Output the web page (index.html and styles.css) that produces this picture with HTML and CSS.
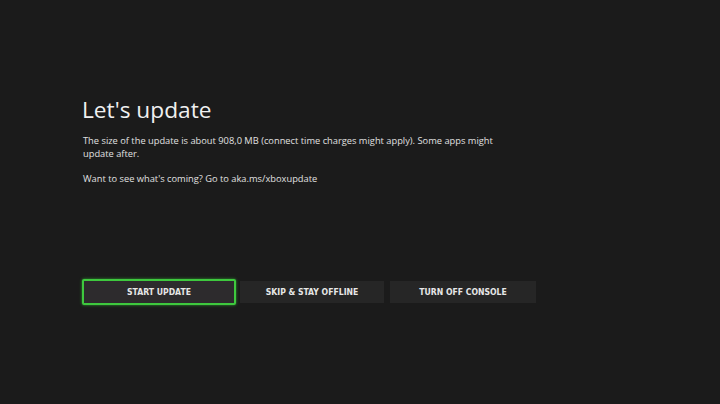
FILE: index.html
```html
<!DOCTYPE html>
<html lang="en">
<head>
  <meta charset="UTF-8">
  <title>Let's update</title>
  <link rel="stylesheet" href="styles.css">
</head>
<body>

  <div class="screen">
    <h1 class="title">Let's update</h1>
    <p class="info">The size of the update is about 908,0 MB (connect time charges might apply). Some apps might update after.</p>
    <p class="info">Want to see what's coming? Go to aka.ms/xboxupdate</p>

    <div class="actions">
      <button class="action focused">START UPDATE</button>
      <button class="action skip">SKIP &amp; STAY OFFLINE</button>
      <button class="action off">TURN OFF CONSOLE</button>
    </div>
  </div>

</body>
</html>
```

FILE: styles.css
```css
body {
  margin: 0;
  background: #1b1b1b;
  color: #e8e8e8;
  font-family: "Open Sans", "Noto Sans", sans-serif;
}

.screen {
  width: 720px;
  height: 404px;
  box-sizing: border-box;
  padding: 97px 0 0 83px;
}

.title {
  margin: 0 0 11px -1px;
  font-size: 22.7px;
  font-weight: 400;
  line-height: 26px;
  color: #f0f0f0;
}

.info {
  width: 416px;
  margin: 0 0 12px;
  font-size: 9.3px;
  line-height: 13px;
  color: #e0e0e0;
}

.actions {
  display: flex;
  align-items: center;
  gap: 4px;
  margin-top: 94px;
  margin-left: -1px;
}

.action {
  height: 22px;
  border: 0;
  padding: 0;
  background: #262626;
  color: #e6e6e6;
  font-family: "DejaVu Sans", sans-serif;
  font-stretch: condensed;
  font-weight: 700;
  font-size: 8.6px;
}

/* bouton actif */
.focused {
  width: 154px;
  height: 26px;
  background: #2d2b2d;
  border: 2px solid #3ec83e;
  border-radius: 2px;
  box-shadow: 0 0 3px #2fa02f;
}

.skip {
  width: 144px;
}

.off {
  width: 146px;
  margin-left: 2px;
}
```
